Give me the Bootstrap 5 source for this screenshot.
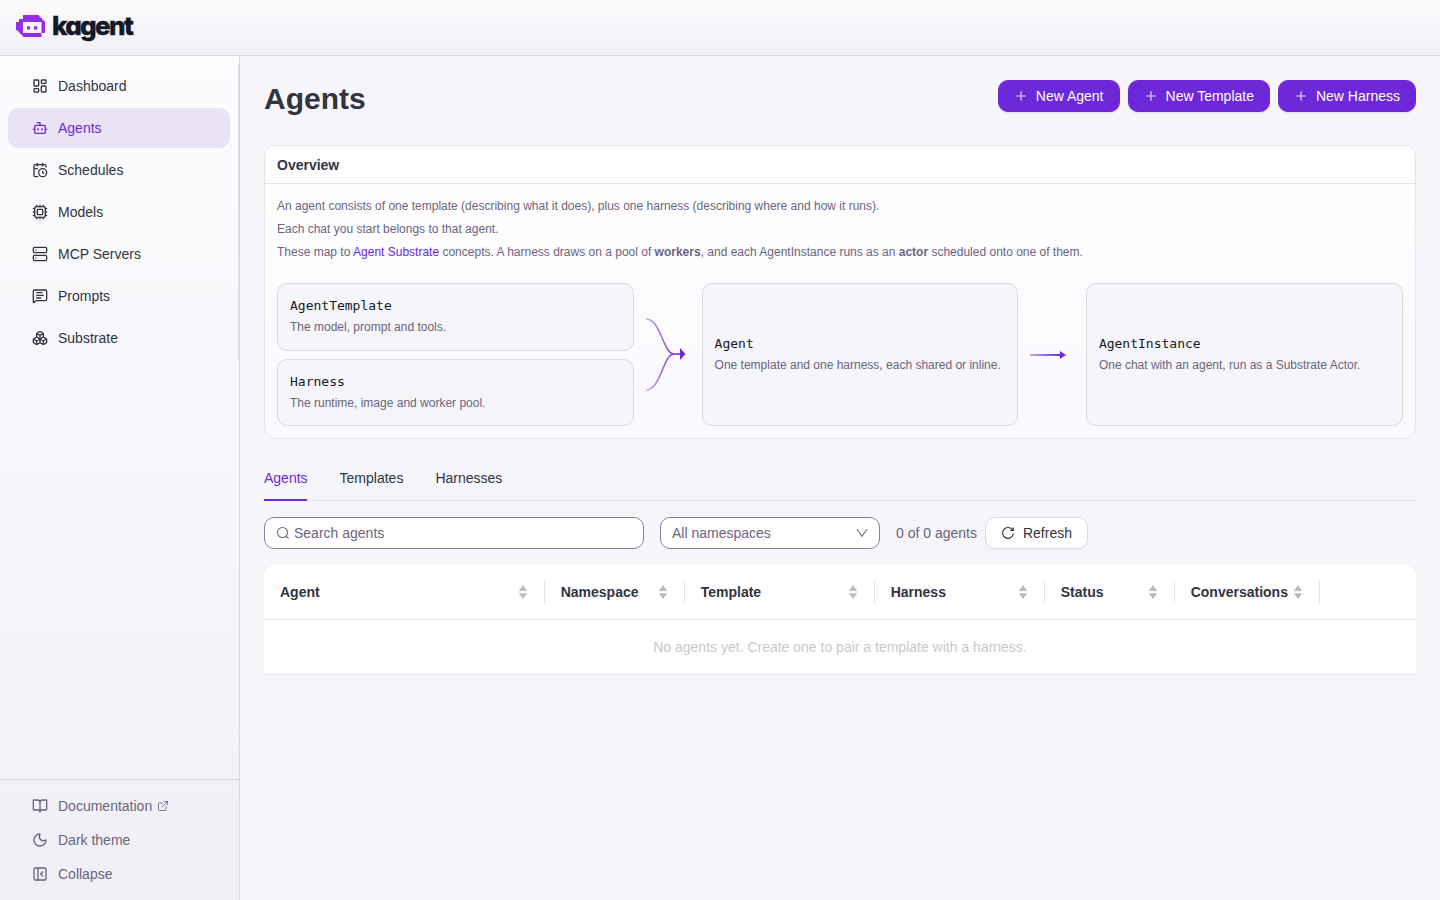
<!DOCTYPE html>
<html lang="en">
<head>
<meta charset="utf-8">
<meta name="viewport" content="width=device-width, initial-scale=1">
<title>kagent</title>
<link rel="stylesheet" href="https://cdn.jsdelivr.net/npm/bootstrap@5.3.0/dist/css/bootstrap.min.css">
<style>
body{font-family:"Liberation Sans",Arial,sans-serif;font-size:14px;line-height:22px;color:#32343f;background:#f5f5fa;height:100vh;overflow:hidden}
svg{flex:none;display:block}
.ln{fill:none;stroke:currentColor;stroke-width:2;stroke-linecap:round;stroke-linejoin:round}
.topbar{height:56px;padding:0 16px;background:linear-gradient(#fcfcfe,#f1eff6);border-bottom:1px solid #dad8e4}
.wordmark{font:800 26px/30px Inter,sans-serif;font-feature-settings:"cv11";letter-spacing:-1.65px;color:#151927;margin:-3px 0 0 6px;-webkit-text-stroke:.4px #151927}
.side{width:240px;border-right:1px solid #d9d6e5;background:linear-gradient(#fcfcfe,#f1eff6)}
.menu{margin:8px 0 0;padding:2px 0 0;border-right:1px solid #dfdce8}
.menu a{height:40px;margin:0 8px 2px;padding:0 24px;gap:10px;border-radius:10px;color:#32343f}
.menu a.active{background:#eae2f7;color:#6d28d9}
.foot{border-top:1px solid #d9d6e5;padding:9px 8px}
.foot a{height:34px;padding:0 24px;gap:10px;color:#6b6580}
.main{padding:24px 24px 0}
h1{font-size:30px;line-height:38px;font-weight:700;margin:0}
.headrow{height:65px}
.btn{--bs-btn-font-size:14px;height:32px;border-radius:10px;padding:0 15px;line-height:22px;display:flex;align-items:center;gap:8px}
.btn-brand,.btn-brand:hover{background:#6d28d9;border-color:#6d28d9;color:#fff;box-shadow:0 2px 0 rgba(109,40,217,.07)}
.btn-plain,.btn-plain:hover{background:#fff;border-color:#dad7e8;color:#32343f;box-shadow:0 2px 0 rgba(0,0,0,.02)}
.overview{height:294px;border:1px solid #e5e4e9;border-radius:12px;background:linear-gradient(#fff,#faf9fe);color:#32343f}
.overview .card-header{height:38px;padding:0 12px;background:none;border-bottom:1px solid #e7e6e9;font-weight:700}
.overview .card-body{padding:12px;font-size:12px;line-height:20px;color:#6b6580}
.overview p{margin:0 0 3px;line-height:20px}
.overview a{color:#6d28d9;text-decoration:none}
.flow{display:grid;grid-template-columns:356.600px 44px 316.300px 44px 1fr;gap:12px;margin-top:21px;height:143px}
.node{background:#f5f5fa;border:1px solid #dad7e8;border-radius:10px;padding:0 12px;flex:1;display:flex;flex-direction:column;justify-content:center}
.node code{font:13px/20px "DejaVu Sans Mono",monospace;color:#151927;margin-bottom:2px}
.node span{line-height:19px}
.tabs{height:46px;margin-top:16px;gap:32px;border-bottom:1px solid #e6e5ea}
.tabs a{color:#32343f;text-decoration:none;padding:12px 0;height:46px;border-bottom:2px solid transparent}
.tabs a.active{color:#6d28d9;border-color:#6d28d9;width:43.400px;margin-right:.2px}
.tools{margin-top:16px;height:32px}
.field{height:32px;border:1px solid #8680a0;border-radius:10px;background:#fff;color:#6b6580;padding:0 11px}
.grid{margin-top:16px;width:1152px;table-layout:fixed;border-collapse:separate;border-spacing:0;background:#fff;border-radius:12px 12px 0 0}
.grid th{height:55px;padding:0 17px 0 16px;border-bottom:1px solid #e7e6e9;font-weight:700;position:relative}
.grid th:not(:first-child){padding-left:15.700px}
.grid th:not(:last-child)::after{content:"";position:absolute;right:0;top:16px;height:22px;width:1px;background:#e5e4e9}
.grid td{height:55px;border-bottom:1px solid #e7e6e9;text-align:center;color:#c8c8cc}
</style>
</head>
<body class="d-flex flex-column">
<svg width="0" height="0" class="position-absolute"><defs>
<symbol id="sort" viewBox="0 0 10 16"><path d="M5 1.500 8.800 6.700H1.200zM5 14.500 1.200 9.600h7.600z" fill="#b9b9bd" stroke="#b9b9bd" stroke-width=".5" stroke-linejoin="round"/></symbol>
<symbol id="plus" viewBox="0 0 14 14"><path d="M7 2.300v9.400M2.300 7h9.400" stroke="#fff" stroke-opacity=".85" stroke-width="1.100" fill="none"/></symbol>
<linearGradient id="fade" gradientUnits="userSpaceOnUse" x1="0" y1="0" x2="32" y2="0"><stop stop-color="#6d28d9" stop-opacity=".4"/><stop offset="1" stop-color="#6d28d9"/></linearGradient>
</defs></svg>
<header class="topbar d-flex align-items-center">
<svg width="30" height="24" viewBox="0 0 30 24" style="margin-top:-4px"><path fill="#942ee8" fill-rule="evenodd" d="M7 1h16v1.500h1.500V4H26v1.500h1.500V7H29v12h-3.500v4H7v-1.500H5.500V20H4v-1.500H2.500V17H1v-1H0V8h3V5h4zM7 8v11h18.500V8zM11 12.300h3v3.200h-3zM18 12.300h3.300v3.200H18z"/></svg>
<span class="wordmark">kagent</span>
</header>
<div class="d-flex flex-grow-1">
<aside class="side d-flex flex-column flex-shrink-0">
<nav class="menu nav flex-column">
<a class="d-flex align-items-center text-decoration-none" href="#"><svg class="ln" width="16" height="16" viewBox="0 0 24 24"><rect width="7" height="9" x="3" y="3" rx="1"/><rect width="7" height="5" x="14" y="3" rx="1"/><rect width="7" height="9" x="14" y="12" rx="1"/><rect width="7" height="5" x="3" y="16" rx="1"/></svg>Dashboard</a>
<a class="active d-flex align-items-center text-decoration-none" href="#"><svg class="ln" width="16" height="16" viewBox="0 0 24 24"><path d="M12 8V4H8"/><rect width="16" height="12" x="4" y="8" rx="2"/><path d="M2 14h2M20 14h2M15 13v2M9 13v2"/></svg>Agents</a>
<a class="d-flex align-items-center text-decoration-none" href="#"><svg class="ln" width="16" height="16" viewBox="0 0 24 24"><path d="M16 14v2.200l1.600 1M16 2v4M21 7.500V6a2 2 0 0 0-2-2H5a2 2 0 0 0-2 2v14a2 2 0 0 0 2 2h3.500M3 10h5M8 2v4"/><circle cx="16" cy="16" r="6"/></svg>Schedules</a>
<a class="d-flex align-items-center text-decoration-none" href="#"><svg class="ln" width="16" height="16" viewBox="0 0 24 24"><path d="M12 20v2M12 2v2M17 20v2M17 2v2M2 12h2M2 17h2M2 7h2M20 12h2M20 17h2M20 7h2M7 20v2M7 2v2"/><rect x="4" y="4" width="16" height="16" rx="2"/><rect x="8" y="8" width="8" height="8" rx="1"/></svg>Models</a>
<a class="d-flex align-items-center text-decoration-none" href="#"><svg class="ln" width="16" height="16" viewBox="0 0 24 24"><rect width="20" height="8" x="2" y="2" rx="2"/><rect width="20" height="8" x="2" y="14" rx="2"/><path d="M6 6h.01M6 18h.01"/></svg>MCP Servers</a>
<a class="d-flex align-items-center text-decoration-none" href="#"><svg class="ln" width="16" height="16" viewBox="0 0 24 24"><path d="M22 17a2 2 0 0 1-2 2H6.828a2 2 0 0 0-1.414.586l-2.202 2.202A.71.71 0 0 1 2 21.286V5a2 2 0 0 1 2-2h16a2 2 0 0 1 2 2zM7 11h10M7 15h6M7 7h8"/></svg>Prompts</a>
<a class="d-flex align-items-center text-decoration-none" href="#"><svg class="ln" width="16" height="16" viewBox="0 0 24 24"><path d="M2.970 12.920A2 2 0 0 0 2 14.630v3.240a2 2 0 0 0 .97 1.710l3 1.800a2 2 0 0 0 2.060 0L12 19v-5.500l-5-3zM7 16.500l-4.740-2.850M7 16.500l5-3M7 16.500v5.170M12 13.500V19l3.970 2.380a2 2 0 0 0 2.060 0l3-1.800a2 2 0 0 0 .97-1.710v-3.240a2 2 0 0 0-.97-1.710L17 10.500zM17 16.500l-5-3M17 16.500l4.740-2.850M17 16.500v5.170M7.970 4.420A2 2 0 0 0 7 6.130v4.370l5 3 5-3V6.130a2 2 0 0 0-.97-1.710l-3-1.800a2 2 0 0 0-2.060 0zM12 8 7.260 5.150M12 8l4.740-2.850M12 13.500V8"/></svg>Substrate</a>
</nav>
<div class="foot mt-auto">
<a class="d-flex align-items-center text-decoration-none" href="#"><svg class="ln" width="16" height="16" viewBox="0 0 24 24"><path d="M12 7v14M3 18a1 1 0 0 1-1-1V4a1 1 0 0 1 1-1h5a4 4 0 0 1 4 4 4 4 0 0 1 4-4h5a1 1 0 0 1 1 1v13a1 1 0 0 1-1 1h-6a3 3 0 0 0-3 3 3 3 0 0 0-3-3z"/></svg><span class="d-flex align-items-center">Documentation<svg class="ln" style="margin-left:5px;stroke-width:1.700" width="12" height="12" viewBox="0 0 24 24"><path d="M15 3h6v6M10 14 21 3M18 13v6a2 2 0 0 1-2 2H5a2 2 0 0 1-2-2V8a2 2 0 0 1 2-2h6"/></svg></span></a>
<a class="d-flex align-items-center text-decoration-none" href="#"><svg class="ln" width="16" height="16" viewBox="0 0 24 24"><path d="M20.985 12.486a9 9 0 1 1-9.473-9.472c.405-.022.617.46.402.803a6 6 0 0 0 8.268 8.268c.344-.215.825-.004.803.401"/></svg>Dark theme</a>
<a class="d-flex align-items-center text-decoration-none" href="#"><svg class="ln" width="16" height="16" viewBox="0 0 24 24"><rect width="18" height="18" x="3" y="3" rx="2"/><path d="M9 3v18M16 15l-3-3 3-3"/></svg>Collapse</a>
</div>
</aside>
<main class="main flex-grow-1">
<div class="headrow d-flex justify-content-between align-items-start">
<h1>Agents</h1>
<div class="d-flex gap-2">
<button class="btn btn-brand"><svg width="14" height="14"><use href="#plus"/></svg>New Agent</button>
<button class="btn btn-brand"><svg width="14" height="14"><use href="#plus"/></svg>New Template</button>
<button class="btn btn-brand"><svg width="14" height="14"><use href="#plus"/></svg>New Harness</button>
</div>
</div>
<section class="card overview">
<div class="card-header d-flex align-items-center">Overview</div>
<div class="card-body">
<p>An agent consists of one template (describing what it does), plus one harness (describing where and how it runs).</p>
<p>Each chat you start belongs to that agent.</p>
<p>These map to <a href="#">Agent Substrate</a> concepts. A harness draws on a pool of <strong>workers</strong>, and each AgentInstance runs as an <strong>actor</strong> scheduled onto one of them.</p>
<div class="flow">
<div class="d-flex flex-column gap-2">
<div class="node"><code>AgentTemplate</code><span>The model, prompt and tools.</span></div>
<div class="node"><code>Harness</code><span>The runtime, image and worker pool.</span></div>
</div>
<svg width="44" height="143" fill="none"><path d="M0 36C15 36 17 71 28 71h8M0 107C15 107 17 71 28 71" stroke="url(#fade)" stroke-width="1.500"/><path d="M34 65l5.500 6-5.500 6z" fill="#6d28d9"/></svg>
<div class="node"><code>Agent</code><span>One template and one harness, each shared or inline.</span></div>
<svg width="44" height="143"><path d="M0 71h31v2H0z" fill="url(#fade)"/><path d="M30 68l6 4-6 4z" fill="#6d28d9"/></svg>
<div class="node"><code>AgentInstance</code><span>One chat with an agent, run as a Substrate Actor.</span></div>
</div>
</div>
</section>
<nav class="tabs d-flex"><a class="active" href="#">Agents</a><a href="#">Templates</a><a href="#">Harnesses</a></nav>
<div class="tools d-flex align-items-center">
<div class="field d-flex align-items-center" style="width:380px"><svg width="14" height="14" viewBox="0 0 14 14" fill="none" stroke="currentColor" stroke-width="1.100" class="me-1"><circle cx="6.500" cy="6.500" r="5"/><path d="m10.200 10.200 2.300 2.300"/></svg>Search agents</div>
<div class="field d-flex align-items-center justify-content-between ms-3" style="width:220px">All namespaces<svg width="12" height="12" viewBox="0 0 12 12" fill="none" stroke="currentColor" stroke-width="1.100"><path d="m1 2.200 5 7 5-7"/></svg></div>
<span class="ms-3 me-2" style="color:#6b6580">0 of 0 agents</span>
<button class="btn btn-plain"><svg width="14" height="14" viewBox="0 0 14 14" fill="none" stroke="currentColor" stroke-width="1.200"><path d="M11.600 4A5.400 5.400 0 1 0 12.400 7.500M12.300 1.500v3h-3"/></svg>Refresh</button>
</div>
<table class="grid">
<colgroup><col style="width:281px"><col style="width:140px"><col style="width:190px"><col style="width:170px"><col style="width:130px"><col style="width:145px"><col></colgroup>
<thead><tr>
<th><div class="d-flex justify-content-between align-items-center">Agent<svg width="10" height="16"><use href="#sort"/></svg></div></th>
<th><div class="d-flex justify-content-between align-items-center">Namespace<svg width="10" height="16"><use href="#sort"/></svg></div></th>
<th><div class="d-flex justify-content-between align-items-center">Template<svg width="10" height="16"><use href="#sort"/></svg></div></th>
<th><div class="d-flex justify-content-between align-items-center">Harness<svg width="10" height="16"><use href="#sort"/></svg></div></th>
<th><div class="d-flex justify-content-between align-items-center">Status<svg width="10" height="16"><use href="#sort"/></svg></div></th>
<th><div class="d-flex justify-content-between align-items-center">Conversations<svg width="10" height="16"><use href="#sort"/></svg></div></th>
<th></th></tr></thead>
<tbody><tr><td colspan="7">No agents yet. Create one to pair a template with a harness.</td></tr></tbody>
</table>
</main>
</div>
<script src="https://cdn.jsdelivr.net/npm/bootstrap@5.3.0/dist/js/bootstrap.bundle.min.js"></script>
</body>
</html>
